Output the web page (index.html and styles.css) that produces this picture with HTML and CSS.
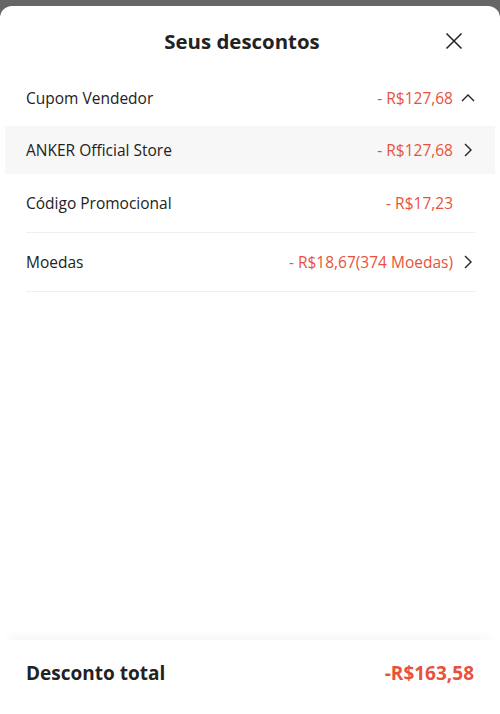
FILE: index.html
```html
<!DOCTYPE html>
<html lang="pt">
<head>
<meta charset="utf-8">
<title>Seus descontos</title>
<link rel="stylesheet" href="styles.css">
</head>
<body>
<div class="sheet">
  <header class="sheet-header">
    <h1 class="sheet-title">Seus descontos</h1>
    <button class="close-btn" aria-label="Fechar">
      <svg width="18" height="18" viewBox="0 0 18 18"><path d="M1.5 1.5 L16.5 16.5 M16.5 1.5 L1.5 16.5" stroke="#222" stroke-width="1.5" fill="none"/></svg>
    </button>
  </header>
  <div class="list">
    <div class="row row-first">
      <span class="label">Cupom Vendedor</span>
      <span class="value">- R$127,68</span>
      <span class="icon">
        <svg width="14" height="14" viewBox="0 0 14 14"><path d="M1 10 L7 4 L13 10" stroke="#222" stroke-width="1.4" fill="none"/></svg>
      </span>
    </div>
    <div class="row row-sub">
      <span class="label">ANKER Official Store</span>
      <span class="value">- R$127,68</span>
      <span class="icon">
        <svg width="14" height="14" viewBox="0 0 14 14"><path d="M4 1 L10 7 L4 13" stroke="#222" stroke-width="1.4" fill="none"/></svg>
      </span>
    </div>
    <div class="row row-line">
      <span class="label">Código Promocional</span>
      <span class="value">- R$17,23</span>
      <span class="icon"></span>
    </div>
    <div class="row row-line">
      <span class="label">Moedas</span>
      <span class="value">- R$18,67(374 Moedas)</span>
      <span class="icon">
        <svg width="14" height="14" viewBox="0 0 14 14"><path d="M4 1 L10 7 L4 13" stroke="#222" stroke-width="1.4" fill="none"/></svg>
      </span>
    </div>
  </div>
  <footer class="total">
    <span class="total-label">Desconto total</span>
    <span class="total-value">-R$163,58</span>
  </footer>
</div>
</body>
</html>
```
FILE: styles.css
```css
* { box-sizing: border-box; }
html, body { height: 100%; }
body {
  margin: 0;
  background: #666666;
  font-family: "Open Sans", "Noto Sans", sans-serif;
  color: #222;
  padding-top: 6px;
}
.sheet {
  height: 708px;
  background: #fff;
  border-radius: 12px 12px 0 0;
  padding: 0 5px;
  display: flex;
  flex-direction: column;
}
.sheet-header {
  height: 62px;
  padding-top: 8px;
  padding-right: 16px;
  display: flex;
  align-items: center;
  justify-content: center;
  position: relative;
}
.sheet-title {
  margin: 0;
  font-size: 20.4px;
  font-weight: 700;
  color: #222;
}
.close-btn {
  position: absolute;
  right: 32px;
  top: 26px;
  background: none;
  border: 0;
  padding: 0;
  width: 18px;
  height: 18px;
  display: flex;
}
.list { flex: 1; }
.row {
  display: flex;
  align-items: center;
  padding: 0 20px 0 21px;
  font-size: 15.5px;
  font-weight: 500;
}
.row-first { height: 58px; padding-top: 2px; }
.row-sub { height: 48px; background: #f7f7f7; }
.row-line {
  height: 59px;
  margin: 0 20px 0 21px;
  padding: 0;
  border-bottom: 1px solid #efefef;
}
.label { flex: 1; color: #222; }
.value { color: #e8523c; }
.icon {
  width: 22px;
  display: flex;
  justify-content: flex-end;
  align-items: center;
}
.total {
  height: 74px;
  display: flex;
  align-items: center;
  justify-content: space-between;
  padding: 0 21px 8px 21px;
  box-shadow: 0 -8px 10px -4px rgba(0,0,0,0.035);
  background: #fff;
}
.total-label { font-size: 19px; font-weight: 700; color: #222; }
.total-value { font-size: 19px; font-weight: 700; color: #e8523c; }
```
